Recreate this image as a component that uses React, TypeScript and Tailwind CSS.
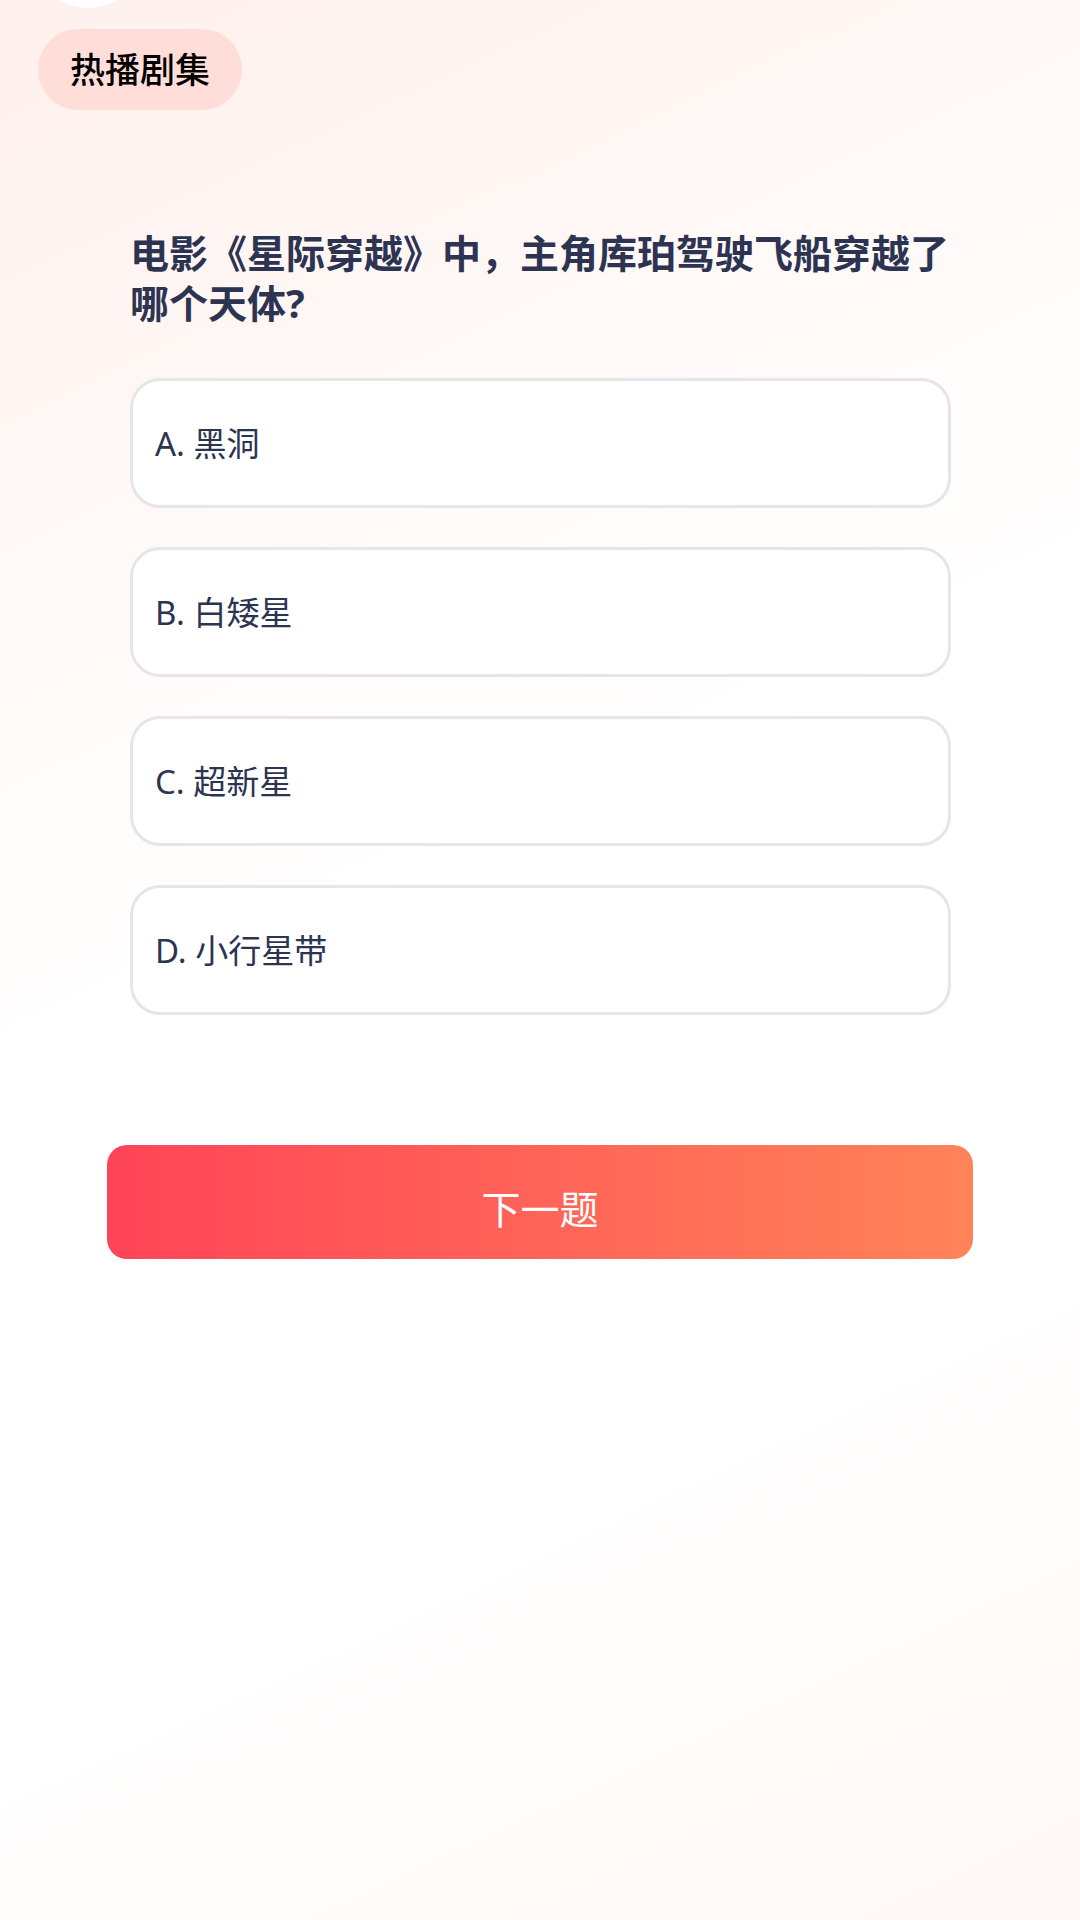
import React from "react";

const options = ["A. 黑洞", "B. 白矮星", "C. 超新星", "D. 小行星带"];

export default function App() {
  return (
    <div
      className="relative w-[1080px] h-[1920px] overflow-hidden bg-[linear-gradient(155deg,#fff0ec_0%,#fff8f6_22%,#ffffff_45%,#ffffff_72%,#fff7f5_100%)]"
      style={{ fontFamily: '"Noto Sans", "Noto Sans CJK SC", sans-serif' }}
    >
      <div className="absolute left-[33px] top-[-102px] w-[110px] h-[110px] rounded-full bg-white" />
      <div className="relative flex flex-col">
        <div className="ml-[38px] mt-[29px] self-start h-[81px] px-[32px] rounded-full bg-[#ffddd8] flex items-center">
          <span className="text-[35px] font-medium text-black leading-none">热播剧集</span>
        </div>
        <div className="mt-[118px] ml-[130px] w-[826px] text-[39px] leading-[50px] font-bold text-[#2d3452]">
          电影《星际穿越》中，主角库珀驾驶飞船穿越了哪个天体?
        </div>
        <div className="mt-[50px] ml-[130px] w-[821px] flex flex-col gap-[39px]">
          {options.map((o) => (
            <div
              key={o}
              className="h-[130px] rounded-[30px] border-[3px] border-[#e6e6ea] bg-white flex items-center pl-[22px]"
            >
              <span className="text-[33px] leading-none text-[#2d3452]">{o}</span>
            </div>
          ))}
        </div>
        <div className="mt-[130px] ml-[107px] w-[866px] h-[114px] pt-[12px] rounded-[20px] bg-[linear-gradient(90deg,#ff4458_0%,#ff8358_100%)] flex items-center justify-center">
          <span className="text-[39px] leading-none text-white">下一题</span>
        </div>
      </div>
    </div>
  );
}
